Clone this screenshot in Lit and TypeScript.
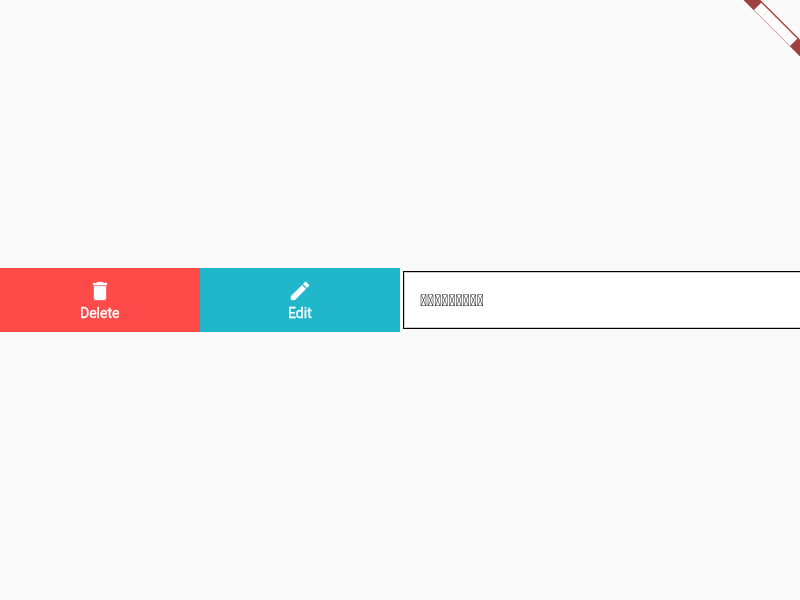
import { LitElement, html, css, svg } from "lit";
import { customElement } from "lit/decorators.js";

@customElement("app-root")
export class AppRoot extends LitElement {
  static styles = css`
    :host {
      display: flex;
      align-items: center;
      position: relative;
      width: 800px;
      height: 600px;
      overflow: hidden;
      background: #fafafa;
      font-family: Roboto, "Liberation Sans", sans-serif;
    }
    .row {
      display: flex;
      width: 100%;
      height: 64px;
    }
    .action {
      flex: 0 0 200px;
      display: flex;
      flex-direction: column;
      align-items: center;
      justify-content: center;
      gap: 2px;
      color: #fff;
      font-size: 14px;
      line-height: 16px;
    }
    .action span {
      -webkit-text-stroke: 0.3px #fff;
      will-change: transform;
    }
    .action svg {
      width: 24px;
      height: 24px;
      fill: currentColor;
      stroke: currentColor;
      stroke-width: 0.4;
    }
    .delete {
      background: #fe4a49;
    }
    .edit {
      background: #21b7ca;
    }
    .tile {
      flex: 0 0 400px;
      box-sizing: border-box;
      display: flex;
      align-items: center;
      margin: 3px;
      padding: 0 16px;
      border: 1px solid #000;
      box-shadow: inset 0 0 0 1px #ccc;
      background: #fff;
      color: rgba(0, 0, 0, 0.87);
      font-size: 16px;
      line-height: 19px;
      white-space: nowrap;
    }
    .tile span {
      -webkit-text-stroke: 0.08px rgba(0, 0, 0, 0.87);
      will-change: transform;
    }
    .banner {
      position: absolute;
      top: 0;
      right: 0;
      width: 60px;
      height: 60px;
    }
  `;

  private action(kind: string, label: string, path: string) {
    return html`<div class="action ${kind}">
      <svg viewBox="0 0 24 24"><path d=${path} /></svg>
      <span>${label}</span>
    </div>`;
  }

  render() {
    return html`
      <div class="row">
        ${this.action("delete", "Delete", "M6 19c0 1.1.9 2 2 2h8c1.1 0 2-.9 2-2V7H6v12zM19 4h-3.5l-1-1h-5l-1 1H5v2h14V4z")}
        ${this.action("edit", "Edit", "M3 17.25V21h3.75L17.81 9.94l-3.75-3.75L3 17.25zM20.71 7.04c.39-.39.39-1.02 0-1.41l-2.34-2.34c-.39-.39-1.02-.39-1.41 0l-1.83 1.83 3.75 3.75 1.83-1.83z")}
        <div class="tile"><span>${"\u{F1234}".repeat(9)}</span></div>
      </div>
      <svg class="banner" viewBox="0 0 60 60">
        <g transform="translate(60 0) rotate(45)">
          <rect x="-40" y="28" width="80" height="12" fill="#a14040" />
          <rect x="-25.5" y="29.4" width="51" height="10.2" fill="#fff" />
          ${[1, 2, 3, 4].map(
            (i) => svg`<rect x=${-25.7 + i * 10.2} y="29.4" width="0.4" height="10.2" fill="#a14040" opacity="0.25" />`,
          )}
        </g>
      </svg>
    `;
  }
}
